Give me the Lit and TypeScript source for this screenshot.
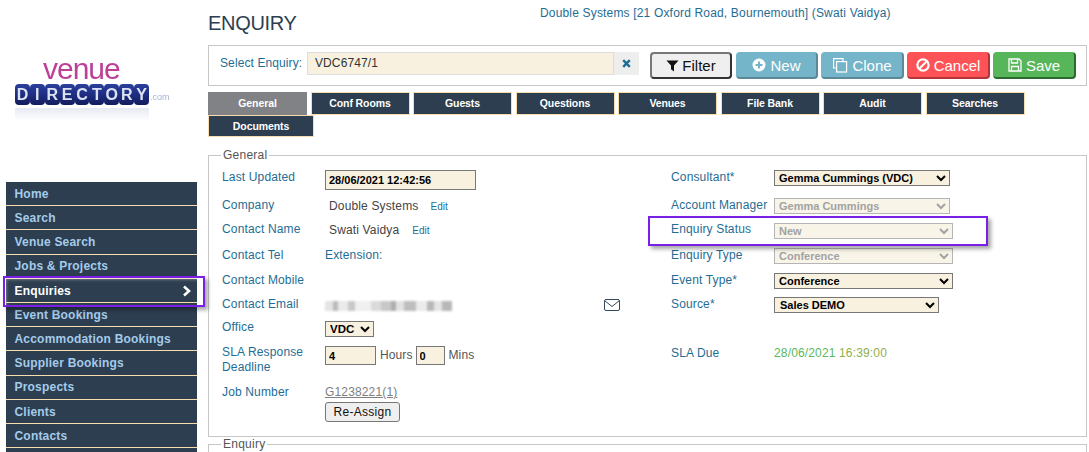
import { LitElement, html, css } from "lit";
import { customElement } from "lit/decorators.js";

const NAV = ["Home","Search","Venue Search","Jobs & Projects","Enquiries","Event Bookings","Accommodation Bookings","Supplier Bookings","Prospects","Clients","Contacts",""];
const TABS = ["General","Conf Rooms","Guests","Questions","Venues","File Bank","Audit","Searches","Documents"];

@customElement("app-root")
export class AppRoot extends LitElement {
  static styles = css`
    :host { display:block; position:relative; width:1089px; height:452px; overflow:hidden; background:#fff;
      font-family:"Liberation Sans",Arial,sans-serif; font-size:12px; color:#1f6d94; }
    * { box-sizing:border-box; }
    .page { display:grid; grid-template-columns:208px 879px; }
    .side { padding:60px 0 0 6px; }
    .logo { height:122px; display:flex; flex-direction:column; filter:blur(.45px); }
    .venue { font-size:30px; line-height:18px; height:24px; color:#bc3f98; padding-left:37px; letter-spacing:-1px; }
    .dirline { display:flex; align-items:flex-end; margin-left:9px; }
    .dir { display:flex; width:134px; height:21px; }
    .dir span { flex:1; background:linear-gradient(#2b3f9c,#202f86 45%,#121c5c); border-radius:4px; color:#dbe3f2; font-weight:700; font-size:16px; line-height:21px; text-align:center; }
    .com { font-size:9px; color:#a6b2d2; padding:0 0 3px 1px; line-height:10px; }
    .reflect { margin:3px 0 0 9px; width:134px; height:13px; background:linear-gradient(#e8eaf2,#fff); }
    .nav { width:191px; background:#2c3e50; }
    .nav div { height:24.2px; border-bottom:1px solid #f6dcae; padding:0.5px 0 0 8.5px; line-height:22px; font-weight:700; font-size:12px; letter-spacing:.2px; color:#a5cbea; display:flex; justify-content:space-between; align-items:center; }
    .nav .on { color:#fff; }
    .nav svg { margin-right:5px; }
    main { display:flex; flex-direction:column; }
    .head { height:45px; display:flex; }
    h1 { margin:11px 0 0; font-weight:400; font-size:20px; line-height:24px; letter-spacing:-.3px; color:#2c3e50; width:332px; }
    .who { margin-top:6px; line-height:14px; letter-spacing:.17px; }
    .panel { height:41px; border:1px solid #c6c6c6; display:flex; padding:6px 0 0 11px; }
    .panel label { line-height:22px; width:87px; letter-spacing:.1px; }
    .enq { width:307px; height:23px; background:#f8f1e0; border:1px solid #ddd; padding:0 7px; line-height:21px; color:#333; letter-spacing:.1px; }
    .clear { width:25px; height:23px; background:#eee; display:flex; align-items:center; justify-content:center; }
    .btns { display:flex; gap:3px; margin-left:11px; }
    .btn { width:83px; height:27px; border-radius:4px; font-size:15px; display:flex; align-items:center; justify-content:center; gap:4px; color:#fff; border-style:solid; border-width:1px 2px 2px 1px; }
    .filter { background:#efefef; color:#111; width:82px; margin-right:1px; gap:3px; border:2px solid #333; border-top-color:#777; border-left-color:#777; }
    .new { background:#74b5c9; width:82px; border-color:#74b5c9 #5c8997 #5c8997 #74b5c9; }
    .clone { background:#74b5c9; border-color:#74b5c9 #5c8997 #5c8997 #74b5c9; }
    .cancel { background:#fd5356; border-color:#fd5356 #b23537 #b23537 #fd5356; }
    .save { background:#57b55a; border-color:#57b55a #2d6a30 #2d6a30 #57b55a; }
    .tabs { display:flex; flex-wrap:wrap; column-gap:3.5px; margin-top:6px; }
    .tab { width:99px; height:22.5px; background:#2c3e50; border:1px solid #f8dcb0; color:#fff; font-weight:700; font-size:10.5px; letter-spacing:-.1px; line-height:20px; text-align:center; }
    .tab.active { background:#808285; border-color:#808285; }
    .tab.wide { width:106px; }
    fieldset { margin:0; padding:8px 0 0 13px; border:1px solid #c6c6c6; min-width:0; }
    .general { margin-top:11px; height:289px; }
    legend { padding:0 2px; margin-left:-1px; line-height:14px; color:#555; font-size:12px; letter-spacing:.25px; }
    .cols { display:grid; grid-template-columns:449px 1fr; }
    .row { display:grid; grid-template-columns:103px 1fr; line-height:14px; align-items:start; letter-spacing:.15px; }
    .h23 { height:23px; } .h24 { height:24px; } .h25 { height:25px; } .h26 { height:26px; } .h28 { height:28px; } .h40 { height:40px; } .h49 { height:49px; }
    .sla { line-height:15px; }
    input { font:700 11px "Liberation Sans",Arial,sans-serif; color:#000; background:#f8f1e0; border:1px solid #777; padding:0 3px; margin:0; outline:none; display:block; }
    .stamp { width:151px; height:20px; }
    .val { padding:1px 0 0 4px; color:#444; display:flex; align-items:baseline; }
    .edit { font-size:10px; color:#1f6d94; letter-spacing:0; }
    .e1 { margin-left:12px; } .e2 { margin-left:13px; }
    .mail { display:flex; }
    .blur { width:127px; height:10px; margin-top:4px; filter:blur(1px); background:linear-gradient(90deg,#e4e4e4 0 6%,#bbb 6% 10%,#eaeaea 10% 18%,#c8c8c8 18% 24%,#f0f0f0 24% 36%,#dadada 36% 44%,#c8c8c8 44% 52%,#aeaeae 52% 56%,#e2e2e2 56% 62%,#bebebe 62% 72%,#ebebeb 72% 80%,#b8b8b8 80% 86%,#e4e4e4 86% 92%,#b8b8b8 92% 100%); }
    .mail svg { margin:2px 0 0 152px; }
    select { font:700 11px "Liberation Sans",Arial,sans-serif; height:16px; margin:0; padding:0; color:#000; background-color:#f8f1e0; border:1px solid #777; border-radius:0; display:block; outline:none; }
    select:disabled { color:#a2a2a2; border-color:#b5b5b5; opacity:1; background-color:#f8f4e8; }
    .office { width:49px; margin-top:1px; font-size:11.5px; }
    .w176 { width:176px; } .w179 { width:179px; } .w165 { width:165px; padding-left:1px; } .mt1 { margin-top:1px; }
    .times { display:flex; margin-top:1px; align-items:center; color:#555; letter-spacing:.1px; }
    .times input { height:19px; }
    .hrs { width:51px; margin-right:4px; }
    .mins { width:29px; margin:0 4px 0 3px; }
    .job { display:flex; flex-direction:column; align-items:flex-start; }
    .job a { color:#808080; text-decoration:underline; height:17px; line-height:15px; }
    button { width:75px; height:20px; font:12px "Liberation Sans",Arial,sans-serif; letter-spacing:.3px; padding:0; color:#111; background:#efefef; border:1px solid #767676; border-radius:3px; }
    .due { font-size:12px; color:#5cb85c; }
    .due b { font-weight:400; color:#8fb04c; }
    .mark { position:absolute; border:2px solid #7a1fe8; box-shadow:3px 3px 4px rgba(0,0,0,.35), inset 2px 2px 3px rgba(255,255,255,.3); pointer-events:none; }
    .m1 { left:3px; top:276px; width:202px; height:31px; }
    .m2 { left:648px; top:216px; width:340px; height:30px; box-shadow:3px 3px 4px rgba(0,0,0,.35); }
  `;

  render() {
    return html`
      <div class="page">
        <aside class="side">
          <div class="logo">
            <div class="venue">venue</div>
            <div class="dirline">
              <div class="dir">${"DIRECTORY".split("").map(c => html`<span>${c}</span>`)}</div>
              <div class="com">.com</div>
            </div>
            <div class="reflect"></div>
          </div>
          <nav class="nav">
            ${NAV.map(n => n === "Enquiries"
              ? html`<div class="on">${n}<svg width="10" height="12" viewBox="0 0 10 12"><path d="M2 1.5 7 6 2 10.5" fill="none" stroke="#fff" stroke-width="2.6"/></svg></div>`
              : html`<div>${n}</div>`)}
          </nav>
        </aside>
        <main>
          <div class="head">
            <h1>ENQUIRY</h1>
            <div class="who">Double Systems [21 Oxford Road, Bournemouth] (Swati Vaidya)</div>
          </div>
          <div class="panel">
            <label>Select Enquiry:</label>
            <div class="enq">VDC6747/1</div>
            <div class="clear"><svg width="9" height="9" viewBox="0 0 9 9"><path d="M1.2 1.2 7.8 7.8M7.8 1.2 1.2 7.8" stroke="#1f6d94" stroke-width="2.4"/></svg></div>
            <div class="btns">
              <div class="btn filter"><svg width="13" height="13" viewBox="0 0 14 14"><path d="M.5 1.5h13L8.6 7v6.500L5.400 11V7z" fill="#111"/></svg>Filter</div>
              <div class="btn new"><svg width="14" height="14" viewBox="0 0 14 14"><circle cx="7" cy="7" r="6.500" fill="#fff"/><path d="M7 3.500v7M3.500 7h7" stroke="#74b5c9" stroke-width="2"/></svg>New</div>
              <div class="btn clone"><svg width="16" height="16" viewBox="0 0 16 16" fill="none" stroke="#fff" stroke-width="1.200"><path d="M11 4V1.600H1.600V11H4"/><rect x="4.600" y="4.600" width="10" height="10.400"/></svg>Clone</div>
              <div class="btn cancel"><svg width="14" height="14" viewBox="0 0 14 14" fill="none" stroke="#fff" stroke-width="2.200"><circle cx="7" cy="7" r="5.600"/><path d="M3 11 11 3"/></svg>Cancel</div>
              <div class="btn save"><svg width="14" height="14" viewBox="0 0 14 14" fill="none" stroke="#fff" stroke-width="1.300"><path d="M1 1h10l2 2v10H1z"/><path d="M3.500 1.500v3.500h6V1.500M3.500 13V8.500h7V13"/></svg>Save</div>
            </div>
          </div>
          <div class="tabs">
            ${TABS.map((t, i) => html`<div class="tab ${i === 0 ? "active" : ""} ${i === 8 ? "wide" : ""}">${t}</div>`)}
          </div>
          <fieldset class="general">
            <legend>General</legend>
            <div class="cols">
              <div>
                <div class="row h28"><span>Last Updated</span><input class="stamp" value="28/06/2021 12:42:56"></div>
                <div class="row h24"><span>Company</span><div class="val">Double Systems<span class="edit e1">Edit</span></div></div>
                <div class="row h26"><span>Contact Name</span><div class="val">Swati Vaidya<span class="edit e2">Edit</span></div></div>
                <div class="row h25"><span>Contact Tel</span><span>Extension:</span></div>
                <div class="row h24"><span>Contact Mobile</span><span></span></div>
                <div class="row h23"><span>Contact Email</span><div class="mail"><div class="blur"></div><svg width="16" height="12" viewBox="0 0 16 12" fill="none" stroke="#34495e"><rect x=".5" y=".5" width="15" height="11" rx="1.500"/><path d="M.8 1.800 8 7.500l7.200-5.700"/></svg></div></div>
                <div class="row h25"><span>Office</span><select class="office"><option>VDC</option></select></div>
                <div class="row h40 sla"><span>SLA Response Deadline</span><div class="times"><input class="hrs" value="4">Hours<input class="mins" value="0">Mins</div></div>
                <div class="row"><span>Job Number</span><div class="job"><a>G1238221(1)</a><button>Re-Assign</button></div></div>
              </div>
              <div>
                <div class="row h28"><span>Consultant*</span><select class="w176"><option>Gemma Cummings (VDC)</option></select></div>
                <div class="row h24"><span>Account Manager</span><select class="w176" disabled><option>Gemma Cummings</option></select></div>
                <div class="row h26"><span>Enquiry Status</span><select class="w179 mt1" disabled><option>New</option></select></div>
                <div class="row h25"><span>Enquiry Type</span><select class="w179" disabled><option>Conference</option></select></div>
                <div class="row h24"><span>Event Type*</span><select class="w179"><option>Conference</option></select></div>
                <div class="row h49"><span>Source*</span><select class="w165"><option>Sales DEMO</option></select></div>
                <div class="row"><span>SLA Due</span><span class="due">28/06/2021 <b>16:39:00</b></span></div>
              </div>
            </div>
          </fieldset>
          <fieldset><legend>Enquiry</legend></fieldset>
        </main>
      </div>
      <div class="mark m1"></div>
      <div class="mark m2"></div>
    `;
  }
}
